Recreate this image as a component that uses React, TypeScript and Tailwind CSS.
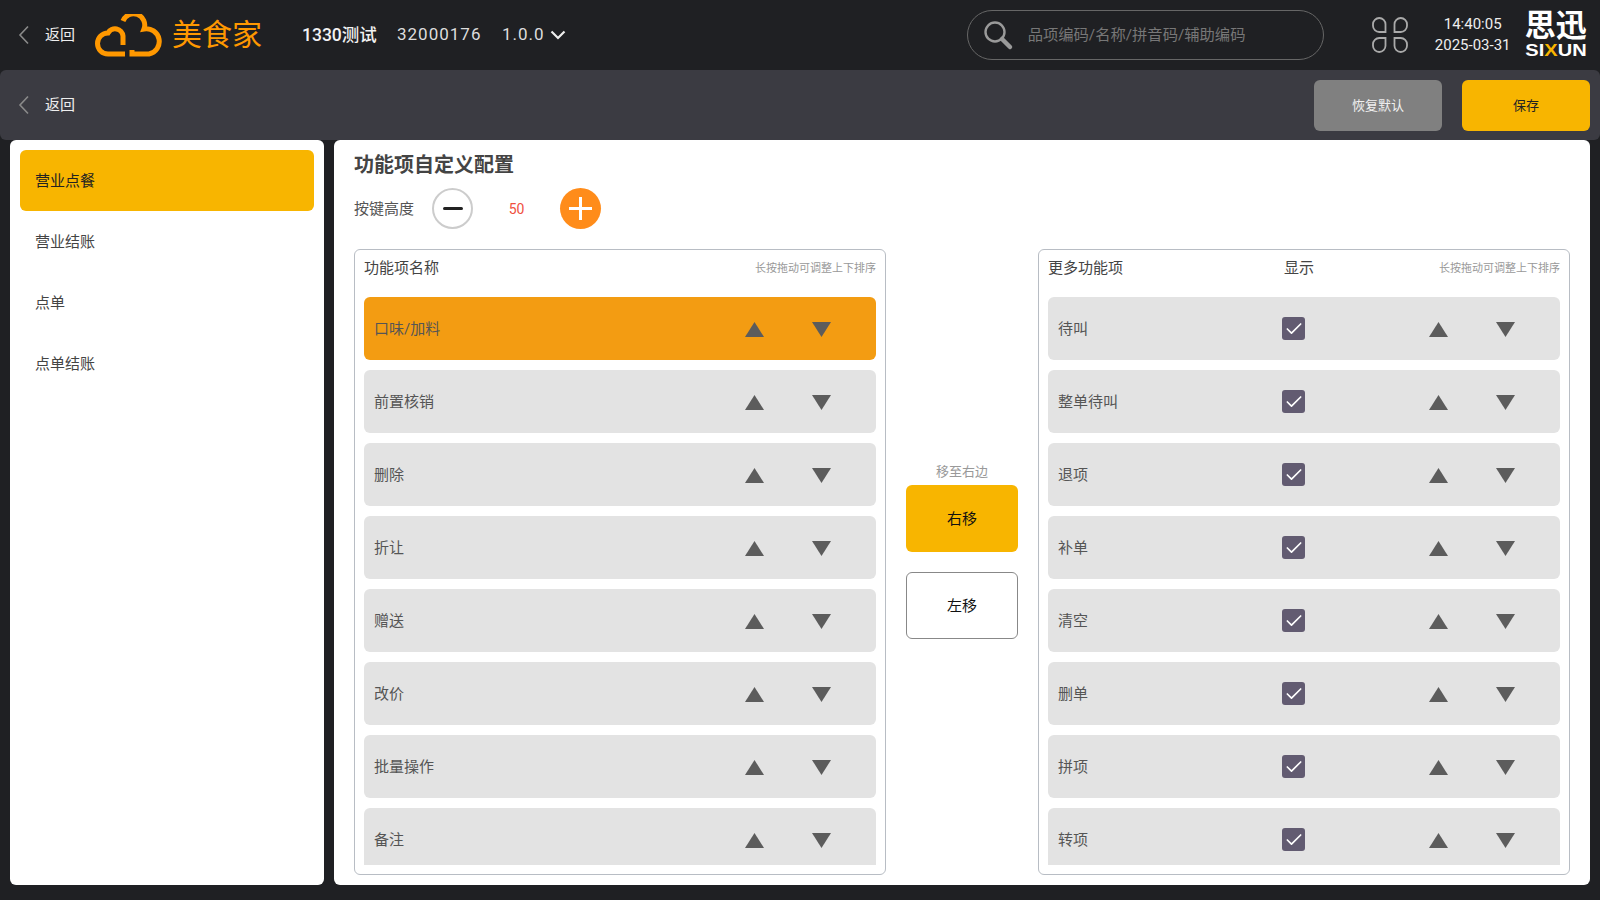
import { Check } from 'lucide-react';

const menus = ['营业点餐', '营业结账', '点单', '点单结账'];
const leftItems = ['口味/加料', '前置核销', '删除', '折让', '赠送', '改价', '批量操作', '备注'];
const rightItems = ['待叫', '整单待叫', '退项', '补单', '清空', '删单', '拼项', '转项'];

function BackLink() {
  return (
    <div className="flex items-center">
      <svg width="12" height="20" viewBox="0 0 12 20" fill="none" className="ml-[18px] mr-[15px]">
        <path d="M10 1.5 2 10l8 8.5" stroke="#8a8a8a" strokeWidth="1.6" />
      </svg>
      <span className="text-[15px] text-[#eeeeee]">返回</span>
    </div>
  );
}

function Arrows() {
  return (
    <div className="flex items-center gap-[48px] pr-[45px] pt-[2px]">
      <svg width="19" height="15" viewBox="0 0 19 15">
        <path d="M9.5 0 19 15H0z" fill="#5c5c5c" />
      </svg>
      <svg width="19" height="15" viewBox="0 0 19 15">
        <path d="M0 0h19L9.5 15z" fill="#5c5c5c" />
      </svg>
    </div>
  );
}

function CloudLogo() {
  return (
    <svg width="67" height="43" viewBox="0 0 67 43" fill="none" stroke="#ff9800" strokeWidth="5">
      <path d="M28 31V22A8 8 0 0 0 13 19A10.5 10.5 0 0 0 13 40H30" />
      <path d="M28 7A11 11 0 0 1 49 15A12.5 12.5 0 0 1 54 40H37V36" />
    </svg>
  );
}

function PetalIcon() {
  return (
    <svg width="36" height="36" viewBox="0 0 36 36" fill="none" stroke="#aaaaaa" strokeWidth="1.8">
      <path d="M1 7.25a6.25 6.25 0 0 1 12.5 0V15H7.25A6.25 6.25 0 0 1 1 8.75z" />
      <path d="M35 7.25a6.25 6.25 0 0 0-12.5 0V15h6.25A6.25 6.25 0 0 0 35 8.75z" />
      <path d="M1 28.75a6.25 6.25 0 0 0 12.5 0V21H7.25A6.25 6.25 0 0 0 1 27.25z" />
      <path d="M35 28.75a6.25 6.25 0 0 1-12.5 0V21h6.25A6.25 6.25 0 0 1 35 27.25z" />
    </svg>
  );
}

function TopBar() {
  return (
    <div className="h-[70px] flex items-center shrink-0">
      <BackLink />
      <div className="ml-[20px]">
        <CloudLogo />
      </div>
      <span className="ml-[10px] w-[130px] text-[30px] leading-none text-[#ff9800]">美食家</span>
      <span className="w-[95px] text-[17.5px] font-medium text-[#f2f2f2]">1330测试</span>
      <span className="w-[105px] text-[17px] tracking-[1px] text-[#dddddd]">32000176</span>
      <span className="text-[17px] tracking-[1px] text-[#dddddd]">1.0.0</span>
      <svg width="16" height="10" viewBox="0 0 16 10" fill="none" className="ml-[5px]">
        <path d="M1.5 1.5 8 8l6.5-6.5" stroke="#eeeeee" strokeWidth="2.2" />
      </svg>
      <div className="ml-[401px] w-[357px] h-[50px] rounded-full border border-[#666666] flex items-center pl-[14px]">
        <svg width="32" height="32" viewBox="0 0 32 32" fill="none">
          <circle cx="13" cy="13" r="9.5" stroke="#9a9a9a" strokeWidth="2.4" />
          <path d="m20 20 8 8" stroke="#9a9a9a" strokeWidth="4.5" strokeLinecap="round" />
        </svg>
        <span className="ml-[14px] text-[15.3px] text-[#777777]">品项编码/名称/拼音码/辅助编码</span>
      </div>
      <div className="ml-[48px]">
        <PetalIcon />
      </div>
      <div className="ml-[28px] w-[74px] flex flex-col items-center text-[#eeeeee] leading-[21.5px]">
        <span className="text-[15px]">14:40:05</span>
        <span className="text-[15px] whitespace-nowrap">2025-03-31</span>
      </div>
      <div className="ml-[14px] w-[64px] flex flex-col items-center text-white">
        <span className="text-[31px] font-bold leading-[32px] whitespace-nowrap">思迅</span>
        <span className="text-[17px] font-bold leading-[18px] scale-x-[1.18] font-['Liberation_Sans',sans-serif]">
          SI<span className="text-[#f8b500]">X</span>UN
        </span>
      </div>
    </div>
  );
}

function ActionBar() {
  return (
    <div className="h-[70px] shrink-0 rounded-md bg-[#3b3b42] flex items-center">
      <BackLink />
      <button className="ml-auto w-[128px] h-[51px] pt-[2px] rounded-md bg-[#808080] text-[13px] text-[#f0f0f0]">恢复默认</button>
      <button className="ml-[20px] mr-[10px] w-[128px] h-[51px] pt-[2px] rounded-md bg-[#f8b500] text-[13px] text-[#222222]">保存</button>
    </div>
  );
}

function Sidebar() {
  return (
    <div className="w-[314px] shrink-0 rounded-md bg-white p-[10px]">
      {menus.map((m, i) => (
        <div
          key={m}
          className={`h-[61px] flex items-center pl-[15px] pt-[2px] text-[15px] rounded-md ${i === 0 ? 'bg-[#f8b500] text-[#222222]' : 'text-[#444444]'}`}
        >
          {m}
        </div>
      ))}
    </div>
  );
}

function Hint() {
  return <span className="ml-auto pt-[1px] text-[11px] text-[#999999]">长按拖动可调整上下排序</span>;
}

function LeftBox() {
  return (
    <div className="w-[532px] shrink-0 rounded-md border border-[#b8bdc4] flex flex-col px-[9px] pb-[9px]">
      <div className="h-[47px] shrink-0 flex items-start pt-[7px] leading-[22px] text-[15px] text-[#444444]">
        <span>功能项名称</span>
        <Hint />
      </div>
      <div className="flex-1 min-h-0 overflow-hidden flex flex-col gap-[10px]">
        {leftItems.map((t, i) => (
          <div
            key={t}
            className={`h-[63px] shrink-0 rounded-md flex items-center ${i === 0 ? 'bg-[#f39c12]' : 'bg-[#e3e3e3]'}`}
          >
            <span className="flex-1 pl-[10px] pt-[2px] text-[15px] text-[#555555]">{t}</span>
            <Arrows />
          </div>
        ))}
      </div>
    </div>
  );
}

function RightBox() {
  return (
    <div className="w-[532px] shrink-0 rounded-md border border-[#b8bdc4] flex flex-col px-[9px] pb-[9px]">
      <div className="h-[47px] shrink-0 flex items-start pt-[7px] leading-[22px] text-[15px] text-[#444444]">
        <span className="w-[236px]">更多功能项</span>
        <span>显示</span>
        <Hint />
      </div>
      <div className="flex-1 min-h-0 overflow-hidden flex flex-col gap-[10px]">
        {rightItems.map((t) => (
          <div key={t} className="h-[63px] shrink-0 rounded-md bg-[#e3e3e3] flex items-center">
            <span className="w-[234px] pl-[10px] pt-[2px] text-[15px] text-[#555555]">{t}</span>
            <div className="w-[23px] h-[23px] rounded-[3px] bg-[#625b71] flex items-center justify-center">
              <Check size={20} color="#ffffff" strokeWidth={2} />
            </div>
            <div className="ml-auto">
              <Arrows />
            </div>
          </div>
        ))}
      </div>
    </div>
  );
}

function MoveButtons() {
  return (
    <div className="flex-1 flex flex-col items-center justify-center pb-[24px]">
      <span className="mb-[2px] text-[13px] leading-[22px] text-[#999999]">移至右边</span>
      <button className="w-[112px] h-[67px] pt-[2px] rounded-md bg-[#f8b500] text-[15px] text-[#111111]">右移</button>
      <button className="mt-[20px] w-[112px] h-[67px] pt-[2px] rounded-md border border-[#888888] bg-white text-[15px] text-[#111111]">左移</button>
    </div>
  );
}

function ConfigPanel() {
  return (
    <div className="flex-1 min-w-0 rounded-md bg-white px-[20px] pb-[10px] flex flex-col">
      <div className="h-[48px] pt-[2px] shrink-0 flex items-center text-[20px] font-bold text-[#444444]">功能项自定义配置</div>
      <div className="h-[41px] shrink-0 flex items-center">
        <span className="w-[78px] pt-[2px] text-[15px] text-[#555555]">按键高度</span>
        <div className="w-[41px] h-[41px] rounded-full border-2 border-[#cccccc] flex items-center justify-center">
          <div className="w-[20px] h-[3px] rounded-full bg-[#222222]" />
        </div>
        <span className="w-[87px] pt-[2px] text-center text-[14px] text-[#f0503e]">50</span>
        <div className="w-[41px] h-[41px] rounded-full bg-[#ff8c1a] relative flex items-center justify-center">
          <div className="w-[23px] h-[3px] bg-white" />
          <div className="absolute w-[3px] h-[23px] bg-white" />
        </div>
      </div>
      <div className="flex-1 min-h-0 mt-[20px] flex">
        <LeftBox />
        <MoveButtons />
        <RightBox />
      </div>
    </div>
  );
}

export default function App() {
  return (
    <div className="w-[1600px] h-[900px] overflow-hidden flex flex-col bg-[#1f2023] font-[Roboto,'Noto_Sans_CJK_SC',sans-serif]">
      <TopBar />
      <ActionBar />
      <div className="flex-1 min-h-0 flex gap-[10px] px-[10px] pb-[15px]">
        <Sidebar />
        <ConfigPanel />
      </div>
    </div>
  );
}
